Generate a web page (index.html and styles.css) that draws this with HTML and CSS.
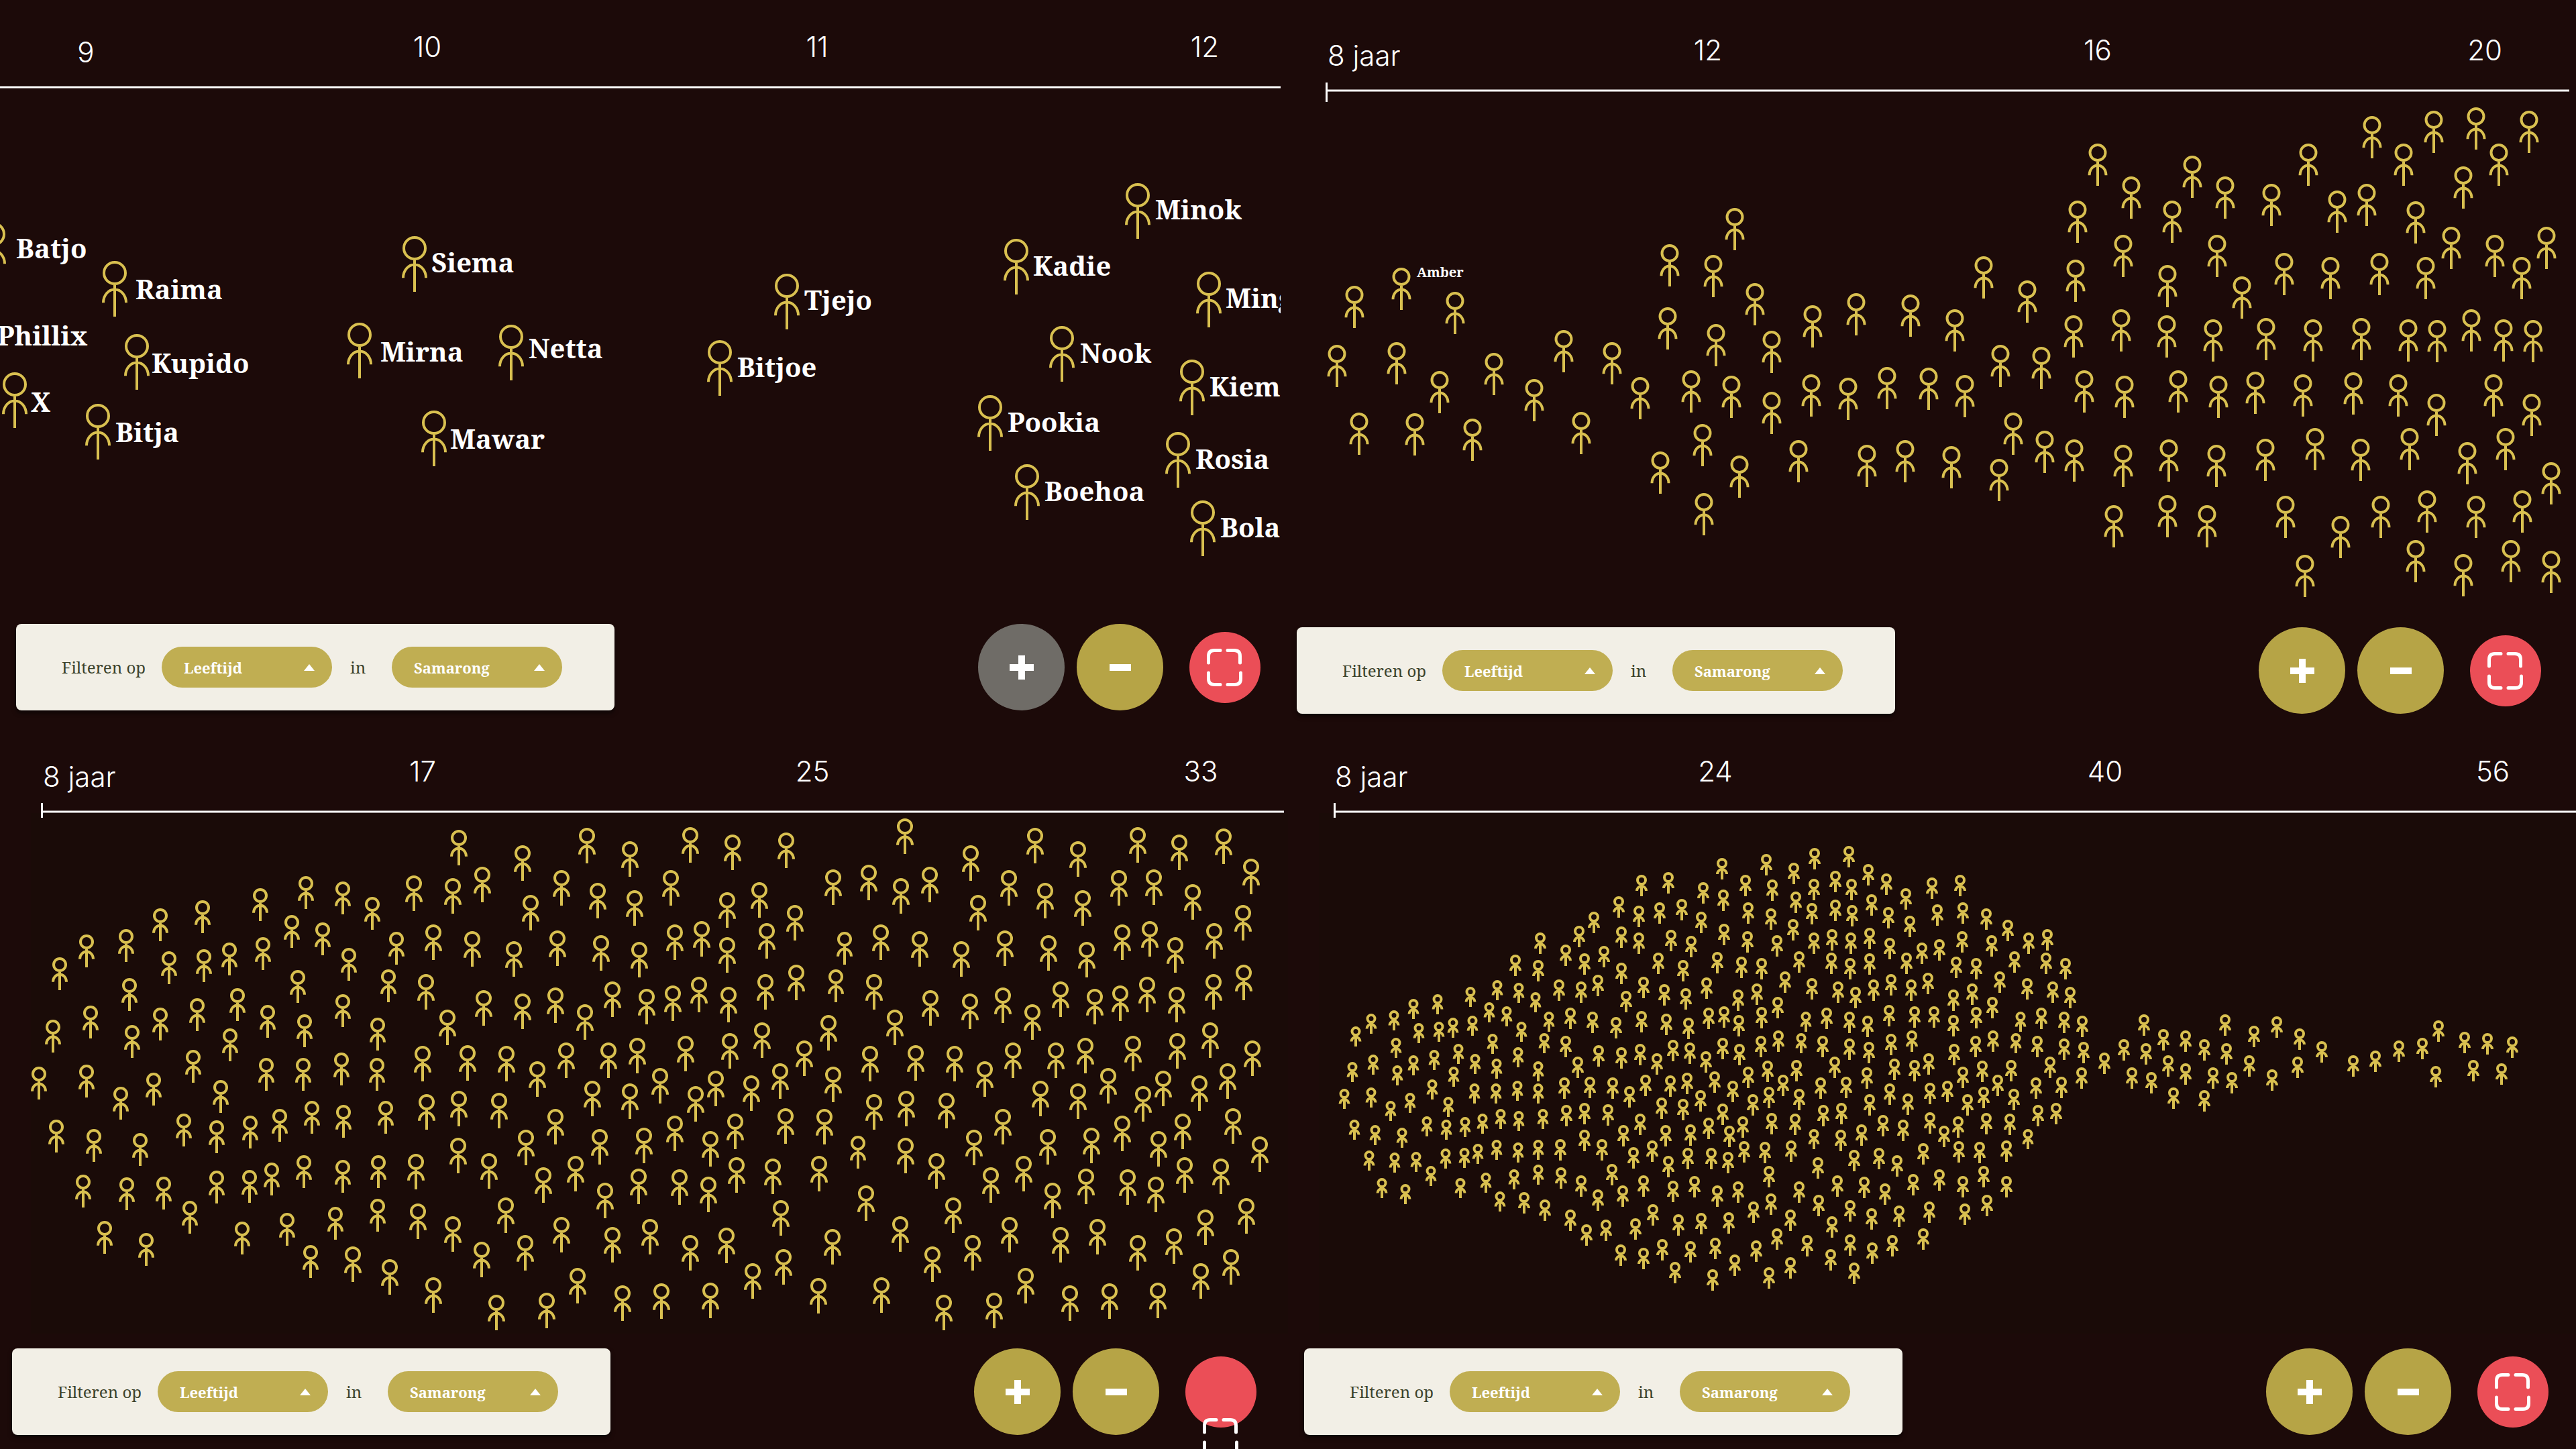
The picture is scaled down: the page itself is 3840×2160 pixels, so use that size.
FILE: index.html
```html
<!DOCTYPE html>
<html lang="nl">
<head>
<meta charset="utf-8">
<title>Leeftijd in Samarong</title>
<link rel="stylesheet" href="styles.css">
</head>
<body>
<svg class="sprite" aria-hidden="true">
  <symbol id="plus" viewBox="0 0 36 36"><path d="M18 0V36M0 18H36" stroke="#fff" stroke-width="10"/></symbol>
  <symbol id="minus" viewBox="0 0 36 36"><path d="M2 18H34" stroke="#fff" stroke-width="10"/></symbol>
  <symbol id="fit" viewBox="0 0 54 56"><path d="M2.500 21V11Q2.500 2.500 11 2.500H20M31 2.500H41Q49.500 2.500 49.500 11V21M2.500 36V45Q2.500 53.500 11 53.500H20M31 53.500H42Q50.500 53.500 50.500 45V36" fill="none" stroke="#fff" stroke-width="5" stroke-linecap="round"/></symbol>
  <symbol id="caret" viewBox="0 0 16 10"><path d="M8 0L16 10H0Z" fill="#fff"/></symbol>
</svg>
<main class="board">

  <section class="panel panel-names">
    <svg class="chart" viewBox="0 0 1920 912" role="img" aria-label="Leeftijd 9 tot 12">
      <clipPath id="edge"><rect x="0" y="0" width="1909" height="912"/></clipPath>
      <g class="ticks"><text x="128" y="93">9</text><text x="637" y="85">10</text><text x="1218" y="85">11</text><text x="1796" y="85">12</text></g>
      <path class="axis" d="M0 130H1909"/>
      <g clip-path="url(#edge)">
        <g class="people" data-field="names"></g>
        <g class="names">
          <text x="1722" y="327">Minok</text><text x="1540" y="411">Kadie</text><text x="1827" y="459">Ming</text>
          <text x="1610" y="541">Nook</text><text x="1803" y="591">Kiem</text><text x="1502" y="644">Pookia</text>
          <text x="1782" y="699">Rosia</text><text x="1557" y="747">Boehoa</text><text x="1819" y="801">Bola</text>
          <text x="1199" y="462">Tjejo</text><text x="1099" y="562">Bitjoe</text><text x="643" y="406">Siema</text>
          <text x="567" y="539">Mirna</text><text x="788" y="534">Netta</text><text x="671" y="669">Mawar</text>
          <text x="202" y="446">Raima</text><text x="226" y="556">Kupido</text><text x="172" y="659">Bitja</text>
          <text x="46" y="614">X</text><text x="24" y="385">Batjo</text><text x="-4" y="515">Phillix</text>
        </g>
      </g>
    </svg>
    <div class="controls">
      <form class="filter">
        <label for="by1">Filteren op</label>
        <span class="pill"><select id="by1"><option>Leeftijd</option></select><svg><use href="#caret"/></svg></span>
        <label class="in" for="place1">in</label>
        <span class="pill"><select id="place1"><option>Samarong</option></select><svg><use href="#caret"/></svg></span>
      </form>
      <div class="zoom">
        <button class="round" aria-label="Inzoomen" disabled><svg><use href="#plus"/></svg></button>
        <button class="round" aria-label="Uitzoomen"><svg><use href="#minus"/></svg></button>
        <button class="fit" aria-label="Passend maken"><svg><use href="#fit"/></svg></button>
      </div>
    </div>
  </section>

  <section class="panel panel-teens">
    <svg class="chart" viewBox="0 0 1920 912" role="img" aria-label="Leeftijd 8 tot 20">
      <g class="ticks"><text class="first" x="59" y="98">8 jaar</text><text x="626" y="90">12</text><text x="1207" y="90">16</text><text x="1784" y="90">20</text></g>
      <path class="axis" d="M57.500 123V152M57 135H1910"/>
      <g class="people" data-field="teens"></g>
      <text class="name-small" x="192" y="413">Amber</text>
    </svg>
    <div class="controls">
      <form class="filter">
        <label for="by2">Filteren op</label>
        <span class="pill"><select id="by2"><option>Leeftijd</option></select><svg><use href="#caret"/></svg></span>
        <label class="in" for="place2">in</label>
        <span class="pill"><select id="place2"><option>Samarong</option></select><svg><use href="#caret"/></svg></span>
      </form>
      <div class="zoom">
        <button class="round" aria-label="Inzoomen"><svg><use href="#plus"/></svg></button>
        <button class="round" aria-label="Uitzoomen"><svg><use href="#minus"/></svg></button>
        <button class="fit" aria-label="Passend maken"><svg><use href="#fit"/></svg></button>
      </div>
    </div>
  </section>

  <section class="panel panel-adults">
    <svg class="chart" viewBox="0 0 1920 912" role="img" aria-label="Leeftijd 8 tot 33">
      <rect class="field" x="46" y="132" width="1874" height="776"/>
      <g class="ticks"><text class="first" x="64" y="93">8 jaar</text><text x="630" y="85">17</text><text x="1211" y="85">25</text><text x="1790" y="85">33</text></g>
      <path class="axis" d="M62.500 117V139M62 130H1914"/>
      <g class="people" data-field="adults"></g>
    </svg>
    <div class="controls">
      <form class="filter">
        <label for="by3">Filteren op</label>
        <span class="pill"><select id="by3"><option>Leeftijd</option></select><svg><use href="#caret"/></svg></span>
        <label class="in" for="place3">in</label>
        <span class="pill"><select id="place3"><option>Samarong</option></select><svg><use href="#caret"/></svg></span>
      </form>
      <div class="zoom">
        <button class="round" aria-label="Inzoomen"><svg><use href="#plus"/></svg></button>
        <button class="round" aria-label="Uitzoomen"><svg><use href="#minus"/></svg></button>
        <button class="fit fit-low" aria-label="Passend maken"><svg><use href="#fit"/></svg></button>
      </div>
    </div>
  </section>

  <section class="panel panel-all">
    <svg class="chart" viewBox="0 0 1920 912" role="img" aria-label="Leeftijd 8 tot 56">
      <rect class="field" x="46" y="132" width="1874" height="776"/>
      <g class="ticks"><text class="first" x="70" y="93">8 jaar</text><text x="637" y="85">24</text><text x="1218" y="85">40</text><text x="1796" y="85">56</text></g>
      <path class="axis" d="M69.500 117V139M69 130H1920"/>
      <g class="people" data-field="all"></g>
    </svg>
    <div class="controls">
      <form class="filter">
        <label for="by4">Filteren op</label>
        <span class="pill"><select id="by4"><option>Leeftijd</option></select><svg><use href="#caret"/></svg></span>
        <label class="in" for="place4">in</label>
        <span class="pill"><select id="place4"><option>Samarong</option></select><svg><use href="#caret"/></svg></span>
      </form>
      <div class="zoom">
        <button class="round" aria-label="Inzoomen"><svg><use href="#plus"/></svg></button>
        <button class="round" aria-label="Uitzoomen"><svg><use href="#minus"/></svg></button>
        <button class="fit" aria-label="Passend maken"><svg><use href="#fit"/></svg></button>
      </div>
    </div>
  </section>

</main>
<script src="people.js"></script>
</body>
</html>
```

FILE: styles.css
```css
* { box-sizing: border-box; }

body {
  margin: 0;
  background: #1c0a09;
  color: #fff;
  font-family: "Noto Serif", "DejaVu Serif Condensed", "DejaVu Serif", serif;
}

.sprite { display: none; }

.board {
  display: grid;
  grid-template-columns: 1fr 1fr;
}

.panel {
  display: flex;
  flex-direction: column;
  min-width: 0;
  overflow: hidden;
}

.chart {
  display: block;
  width: 100%;
}

.field { fill: #1a0b08; }

.axis {
  fill: none;
  stroke: #fff;
  stroke-width: 3px;
}

.ticks text {
  fill: #fff;
  font-family: Inter, "Open Sans", sans-serif;
  font-size: 42px;
  font-weight: 300;
  text-anchor: middle;
}

.ticks .first { text-anchor: start; }

.people {
  fill: none;
  stroke: #d9c050;
  stroke-width: 4px;
}

.names text, .name-small {
  fill: #fff;
  font-size: 40px;
  font-weight: 700;
}

.name-small { font-size: 20px; }

.controls {
  display: flex;
  align-items: center;
  justify-content: space-between;
  padding: 18px 41px 21px 24px;
}

.panel-teens .controls { padding: 23px 52px 16px 13px; }
.panel-adults .controls { padding: 18px 47px 21px 18px; }

.filter {
  display: grid;
  grid-template-columns: 149px 254px 89px 254px;
  align-items: center;
  width: 892px;
  height: 129px;
  padding-left: 68px;
  border-radius: 8px;
  background: #f2efe6;
  box-shadow: 0 4px 6px #0008;
  color: #3b422b;
  font-size: 24px;
}

.filter .in { padding-left: 27px; }

.pill {
  display: grid;
  align-items: center;
  height: 61px;
}

.pill select {
  grid-area: 1 / 1;
  width: 100%;
  height: 61px;
  padding: 0 60px 0 33px;
  border: 0;
  border-radius: 31px;
  appearance: none;
  background: #c0ae52;
  color: #fff;
  font: 700 22px "Noto Serif", "DejaVu Serif Condensed", "DejaVu Serif", serif;
}

.pill svg {
  grid-area: 1 / 1;
  justify-self: end;
  width: 16px;
  height: 10px;
  margin-right: 26px;
  pointer-events: none;
}

.zoom {
  display: flex;
  align-items: center;
  gap: 18px;
}

.zoom button {
  display: flex;
  align-items: center;
  justify-content: center;
  padding: 0;
  border: 0;
  border-radius: 50%;
}

.zoom .round {
  width: 129px;
  height: 129px;
  background: #b6a446;
}

.zoom .round:disabled { background: #6f6c67; }

.round svg {
  width: 36px;
  height: 36px;
}

.zoom .fit {
  width: 106px;
  height: 106px;
  margin-left: 21px;
  background: #eb4e57;
}

.fit svg {
  flex: none;
  width: 54px;
  height: 56px;
}

.zoom .fit-low {
  align-items: flex-start;
  padding-top: 92px;
}
```

FILE: people.js
```js
// Each batch: figure height h, head diameter d, stroke w, and points [x, top]
// on a local grid that starts at (x0, y0) with steps of sx and sy.
const fields = {
  names: [
    { h: 83, d: 36, w: 4, x0: 0, y0: 0, sx: 1, sy: 1, at: "1696,273 1515,356 1802,405 1583,486 1777,536 1476,589 1756,644 1531,692 1793,746 1173,408 1073,507 618,352 536,481 762,484 647,612 171,389 204,498 146,602 22,555 -10,331" }
  ],
  teens: [
    { h: 63, d: 27, w: 4, x0: 40, y0: 140, sx: 0.6378, sy: 0.5102, at: "203,508 92,561 327,578 981,333 830,439 932,470 1028,553 824,623 938,672 1068,692 1163,617 1266,582 1393,586 51,733 192,725 292,809 418,757 581,690 695,725 512,833 760,827 879,808 973,823 1068,870 1161,819 1247,829 1337,798 1434,800 103,931 233,933 368,949 622,929 907,964 808,1045 992,1056 1131,1011 1290,1025 1379,1011 910,1166" },
    { h: 63, d: 27, w: 4, x0: 960, y0: 140, sx: 0.6122, sy: 0.5102, at: "404,145 485,241 633,180 714,241 355,312 584,312 827,263 917,145 987,282 1059,263 1071,65 1149,145 1222,49 1325,39 1454,49 1381,145 1293,212 1177,314 466,412 695,412 1265,388 1370,412 1497,388 125,474 349,484 232,545 574,500 755,533 858,465 971,476 1090,465 1203,476 1435,476 55,629 461,629 344,647 572,647 685,659 814,655 927,659 1046,655 1159,659 1230,661 1314,629 1391,659 1463,661 167,733 267,739 370,808 468,823 599,808 697,823 788,811 904,819 1025,813 1136,819 1368,819 1229,876 1461,876 80,821 198,931 275,984 347,1009 465,1025 576,1009 693,1025 812,1007 932,976 1044,1007 1163,976 1396,976 1304,1017 1508,1076 47,1029 164,1066 442,1201 574,1172 670,1201 861,1174 994,1233 1093,1174 1206,1158 1325,1174 1438,1158 908,1347 1178,1303 1294,1345 1410,1303 1508,1335" }
  ],
  adults: [
    { h: 49, d: 22, w: 4, x0: 0, y0: 120, sx: 0.6122, sy: 0.5102, at: "745,207 835,223 633,243 493,278 391,301 307,362 211,378 145,444 907,268 711,322 786,343 640,386 558,402 497,421 412,428 850,418 966,370 725,483 945,481 315,505 579,535 480,565 391,592 221,587 129,628 321,643 652,585 742,611 834,553 919,622 561,652 471,715 95,764 211,759 294,824 374,783 538,804 649,738 738,738 831,724 918,738 447,902 138,920 229,947 342,958 528,921 609,908 681,887 759,864 836,877 939,864 740,1023 834,1036 921,1023 662,1044 607,1066 527,1068 202,1080 309,1087 399,1085 463,1157 255,1216 356,1250 589,1218 699,1191 816,1174 919,1151 757,1286" },
    { h: 53, d: 24, w: 4, x0: 0, y0: 120, sx: 0.6122, sy: 0.5102, at: "1117,72 1273,117 1430,67 1534,105 1174,180 1008,205 1103,213 1367,190 1455,227 1546,248 1292,263 1055,349 1150,368 1251,397 1357,366 1463,380 1556,400 1038,494 1177,540 1272,550 1352,533 1424,583 1491,515 1089,598 1029,704 1138,701 1234,704 1308,748 1378,693 1481,694 1551,681 1039,845 1117,834 1215,841 1443,806 1534,813 1352,887 1281,948 1461,946 1115,972 1190,1018 1013,1020 1402,1025 1323,1059 1473,1104 1555,1063 1017,1164 1102,1202 1231,1147 1368,1204 1491,1232 1173,1275 1279,1257 860,1290 949,1327 1055,1380 1406,1353 1209,1430 1331,1424 1516,1403" },
    { h: 53, d: 24, w: 4, x0: 960, y0: 120, sx: 0.6122, sy: 0.5102, at: "113,65 215,86 347,80 636,40 795,117 952,67 1057,105 1203,65 1304,86 1412,69 1479,156 66,191 202,254 281,226 461,188 548,174 625,213 696,180 889,190 977,227 1069,248 814,263 1157,191 1242,188 1336,232 1458,292 367,292 75,349 141,340 203,386 299,344 576,349 672,368 773,397 879,366 985,380 1078,400 1165,349 1231,340 1293,386 1389,344 371,466 1461,466 296,494 560,494 134,502 70,528 7,538 206,531 698,540 794,550 874,533 946,583 1014,515 1097,538 1160,528 1225,502 1297,531 1386,494 449,614 611,598 287,636 1378,636 101,674 209,667 391,688 551,704 661,701 757,704 830,748 899,693 1003,694 1074,681 1191,674 1299,667 1481,688 40,768 125,822 174,776 262,789 331,754 461,764 561,845 639,834 737,841 966,806 1057,813 1131,768 1215,822 1265,776 1352,789 1421,754 75,908 222,902 162,952 344,886 440,888 874,887 803,948 984,946 1089,943 1165,908 1253,952 1312,902 1434,886 1500,969 0,943 637,972 712,1018 924,1025 226,1029 314,1032 426,1025 87,1065 157,1086 845,1059 995,1104 1077,1063 1178,1065 1247,1086 1316,1029 1405,1032 540,1111 753,1147 1467,1148 1367,1181 333,1155 624,1201 890,1204 1014,1232 1105,1210 1202,1257 1291,1236 15,1210 112,1257 201,1235 459,1238 801,1257 703,1290 264,1338 340,1298 1355,1338 1430,1298 424,1382 578,1380 43,1397 161,1396 929,1353 730,1430 853,1424 1038,1403 1134,1397 1252,1396" },
    { h: 49, d: 22, w: 4, x0: 960, y0: 120, sx: 0.6122, sy: 0.5102, at: "488,370 467,481 521,967" }
  ],
  all: [
    { h: 30, d: 15, w: 4, x0: 60, y0: 160, sx: 0.3827, sy: 0.4464, at: "658,494 741,505 555,518 427,541 333,557 255,596 167,606 106,650 807,535 627,570 695,583 562,613 485,621 431,634 352,638 753,633 860,601 639,675 841,673 263,688 506,709 413,729 333,746 176,743 93,769 269,780 572,741 655,758 740,720 818,766 489,785 406,827 62,858 168,854 243,898 318,871 467,885 569,841 652,841 736,832 817,841 384,950 101,962 184,979 287,987 459,961 533,953 600,940 671,925 741,933 835,925 655,1028 739,1037 819,1028 582,1041 531,1056 458,1058 160,1065 258,1070 341,1068 399,1116 208,1155 301,1177 515,1156 615,1138 723,1127 818,1112 668,1201" },
    { h: 32, d: 16, w: 4, x0: 60, y0: 160, sx: 0.3827, sy: 0.4464, at: "1221,144 1326,135 1460,168 1132,216 1211,247 1290,236 1378,223 1035,267 1454,267 978,313 1142,315 1209,337 1334,327 1413,348 827,335 924,376 1073,380 999,406 1286,403 730,411 819,427 1382,428 1142,436 898,493 1051,478 986,499 1229,484 1474,485 1309,508 1392,521 1159,531 942,588 1482,588 1029,600 1219,599 1316,608 1402,621 1122,619 926,682 1342,695 1408,704 1053,712 1141,718 1215,708 1472,732 973,750 1281,740 1397,804 1505,800 919,820 1019,817 1107,820 1237,812 1333,813 1174,848 1450,862 1382,892 1299,886 927,911 999,905 1089,909 1215,940 1481,954 1150,978 1315,978 1412,976 997,995 903,1026 1066,1025 1261,1030 1188,1052 1401,1055 1493,1056 1326,1081 1104,1108 907,1121 985,1146 1229,1147 1427,1150 1343,1165 1515,1181 1147,1181 1051,1194 762,1203 845,1227 943,1261 1265,1244 1365,1277 1452,1273 1196,1290 1083,1294 1006,1311 1300,1360 1508,1355 1411,1367 1139,1377 1227,1389 1352,1435 1498,1460" },
    { h: 32, d: 16, w: 4, x0: 640, y0: 160, sx: 0.3827, sy: 0.4464, at: "18,87 110,144 190,74 299,103 379,54 512,47 587,107 459,129 659,138 836,153 947,144 215,159 377,157 523,157 733,188 23,193 305,199 600,209 120,236 369,238 459,226 525,245 857,243 957,236 667,252 210,256 1047,256 295,292 751,280 1131,293 26,307 118,331 233,344 377,337 448,324 520,337 594,320 955,331 1070,344 1213,337 1285,324 671,355 797,370 866,359 1,402 320,399 94,416 172,422 444,403 594,405 738,403 518,421 930,416 1009,422 1157,399 1280,403 1355,421 264,465 1100,465 369,489 1206,489 471,499 1307,499 677,474 820,471 610,493 756,493 155,507 992,507 538,517 1375,517 82,526 919,526 234,550 1071,550 27,582 172,585 1009,585 426,588 1262,588 669,578 769,583 843,583 514,600 1350,600 83,612 920,612 585,614 1421,614 237,663 1074,663 169,682 1005,682 411,682 1247,682 758,664 677,675 20,688 515,690 1352,690 87,707 923,707 590,702 1426,702 458,750 1295,750 195,763 1031,763 309,761 1145,761 689,757 769,761 823,739 120,785 957,785 582,787 1418,787 256,810 1093,810 403,820 1240,820 503,818 1340,818 59,832 895,832 671,840 828,838 201,852 1037,852 320,858 1156,858 138,875 974,875 743,873 592,875 20,908 412,911 1248,911 483,905 1320,905 212,938 1048,938 302,940 1138,940 100,950 937,950 828,936 646,945 723,961 561,976 46,982 882,982 482,995 104,1032 941,1032 185,1034 1022,1034 288,1030 1125,1030 802,1039 631,1055 41,1069 533,1062 700,1079 202,1115 1038,1115 393,1086 864,1127 764,1143 469,1146 572,1151 956,1149 1125,1149 82,1167 319,1168 654,1174 395,1213 209,1207 1050,1211 518,1229 140,1234 826,1235 964,1241 707,1248 602,1257 286,1262 45,1271 448,1284 233,1325 802,1325 351,1346 518,1345 682,1346 151,1364 604,1371 441,1393 67,1412 285,1421 533,1439 202,1454" },
    { h: 30, d: 15, w: 4, x0: 640, y0: 160, sx: 0.3827, sy: 0.4464, at: "345,601 1181,601 326,673 1162,673 375,992 1211,992" },
    { h: 32, d: 16, w: 4, x0: 1180, y0: 160, sx: 0.4464, sy: 0.4082, at: "215,667 281,721 355,724 485,667 147,757 417,757 221,771 491,771 84,805 582,708 658,674 735,717 295,817 566,817 353,844 175,861 446,861 239,876 509,876 643,868 727,820 808,764 314,933 417,942 913,815 988,799 1067,762 1144,751 1199,688 1285,731 1363,736 1445,746 1190,856 1315,834 1409,846" }
  ]
};

// Stick figure: ring for the head, a straight body and a curve for the arms.
function figure(x, y, { h, d, w }) {
  const r = (d - w) / 2;
  const arm = r + 1;
  const shoulder = y + h / 2 + 1;
  const hand = y + h * 0.75;
  return `M${x - r} ${y + d / 2}a${r} ${r} 0 1 1 ${2 * r} 0a${r} ${r} 0 1 1 ${-2 * r} 0` +
    `M${x} ${y + d - 1}V${y + h}` +
    `M${x - arm} ${hand}A${arm} ${hand - shoulder} 0 0 1 ${x + arm} ${hand}`;
}

for (const group of document.querySelectorAll(".people")) {
  for (const batch of fields[group.dataset.field]) {
    for (const pair of batch.at.split(" ")) {
      const [px, py] = pair.split(",").map(Number);
      const x = Math.round(batch.x0 + px * batch.sx);
      const y = Math.round(batch.y0 + py * batch.sy);
      const path = document.createElementNS("http://www.w3.org/2000/svg", "path");
      path.setAttribute("d", figure(x, y, batch));
      group.append(path);
    }
  }
}
```
